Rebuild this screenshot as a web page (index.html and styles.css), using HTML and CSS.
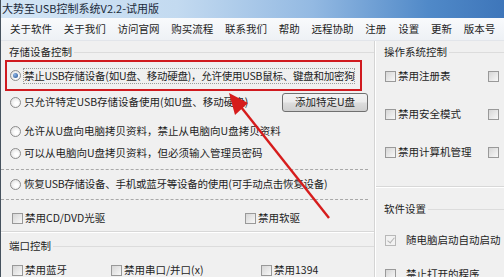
FILE: index.html
```html
<!DOCTYPE html>
<html lang="zh-CN">
<head>
    <meta charset="UTF-8">
    <title>大势至USB控制系统</title>
    <link rel="stylesheet" href="styles.css">
</head>
<body>
<div class="window">
    <div class="titlebar">大势至USB控制系统V2.2-试用版</div>
    <ul class="menubar">
        <li>关于软件</li>
        <li>关于我们</li>
        <li>访问官网</li>
        <li>购买流程</li>
        <li>联系我们</li>
        <li>帮助</li>
        <li>远程协助</li>
        <li>注册</li>
        <li>设置</li>
        <li>更新</li>
        <li>版本号</li>
    </ul>

    <div class="main">
        <!-- 左侧：存储设备 / 端口 -->
        <div class="left">
            <div class="gtitle">存储设备控制</div>
            <div class="redbox">
                <label class="opt tight"><span class="radio checked"></span><span class="focus">禁止USB存储设备(如U盘、移动硬盘)，允许使用USB鼠标、键盘和加密狗</span></label>
            </div>
            <div class="row row2">
                <label class="opt"><span class="radio"></span>只允许特定USB存储设备使用(如U盘、移动硬盘)</label>
                <button class="btn">添加特定U盘</button>
            </div>
            <div class="row row3">
                <label class="opt"><span class="radio"></span>允许从U盘向电脑拷贝资料，禁止从电脑向U盘拷贝资料</label>
            </div>
            <div class="row">
                <label class="opt"><span class="radio"></span>可以从电脑向U盘拷贝资料，但必须输入管理员密码</label>
            </div>
            <div class="dash dash1"></div>
            <div class="row row5">
                <label class="opt tight"><span class="radio"></span>恢复USB存储设备、手机或蓝牙等设备的使用(可手动点击恢复设备)</label>
            </div>
            <div class="dash dash2"></div>
            <div class="row checks checks-a">
                <label class="opt"><span class="check"></span>禁用CD/DVD光驱</label>
                <label class="opt"><span class="check"></span>禁用软驱</label>
            </div>
            <div class="solid"></div>
            <div class="gtitle gtitle-port">端口控制</div>
            <div class="row checks checks-b">
                <label class="opt"><span class="check"></span>禁用蓝牙</label>
                <label class="opt"><span class="check"></span>禁用串口/并口(x)</label>
                <label class="opt"><span class="check"></span>禁用1394</label>
            </div>
        </div>

        <!-- 右侧：系统 / 软件设置 -->
        <div class="right">
            <div class="os">
                <div class="gtitle">操作系统控制</div>
                <div class="osgrid">
                    <label class="opt"><span class="check"></span>禁用注册表</label>
                    <label class="opt"><span class="check"></span></label>
                    <label class="opt"><span class="check"></span>禁用安全模式</label>
                    <label class="opt"><span class="check"></span></label>
                    <label class="opt"><span class="check"></span>禁用计算机管理</label>
                    <label class="opt"><span class="check"></span></label>
                </div>
            </div>
            <div class="soft">
                <div class="gtitle">软件设置</div>
                <label class="opt wide soft1"><span class="check checked"></span>随电脑启动自动启动</label>
                <label class="opt wide soft2"><span class="check"></span>禁止打开的程序</label>
            </div>
        </div>
    </div>

    <svg class="arrow" width="504" height="277" viewBox="0 0 504 277">
        <line x1="329" y1="218" x2="241" y2="107" stroke="#d61c1c" stroke-width="2.4"/>
        <polygon points="229,93 248,103 235,115" fill="#d61c1c"/>
    </svg>
</div>
</body>
</html>
```

FILE: styles.css
```css
* {
    margin: 0;
    padding: 0;
    box-sizing: border-box;
}

body {
    width: 504px;
    height: 277px;
    overflow: hidden;
    background: #f0f0f0;
    font: normal 10.5px/14px "Noto Sans CJK SC", sans-serif;
    color: #1e1e1e;
}

.window {
    position: relative;
    width: 504px;
    height: 277px;
    border-left: 1px solid #46525e;
}

.titlebar {
    height: 18px;
    line-height: 17px;
    padding-left: 1px;
    font-size: 11px;
    color: #1b2a3a;
    background: linear-gradient(to right, #d3e5f5 0%, #c3daf0 35%, #93b9e2 62%, #5089c8 85%, #3e76ba 100%);
}

.menubar {
    list-style: none;
    display: flex;
    height: 23px;
    padding-left: 3px;
    align-items: center;
    background: linear-gradient(#f9fafc, #eef1f5);
    border-bottom: 1px solid #e2e5ea;
}

.menubar li {
    padding: 0 5.9px;
}

.main {
    display: flex;
    height: 236px;
}

.left {
    width: 374px;
    border-right: 1px solid #d4d4d4;
}

.right {
    flex: 1;
    border-left: 1px solid #fff;
    overflow: hidden;
}

.gtitle {
    display: flex;
    align-items: center;
    height: 14px;
    margin-top: 4px;
    padding-left: 8px;
    white-space: nowrap;
}

.gtitle::after {
    content: "";
    flex: 1;
    height: 1px;
    margin-left: 2px;
    background: #dcdcdc;
}

.opt {
    display: flex;
    align-items: center;
    white-space: nowrap;
}

.tight {
    letter-spacing: -0.25px;
}

.radio {
    position: relative;
    width: 11px;
    height: 11px;
    margin-right: 3px;
    border: 1px solid #8d8d8d;
    border-radius: 50%;
    background: radial-gradient(circle at 60% 60%, #ffffff 20%, #d9d9d9 100%);
}

.radio.checked::after {
    content: "";
    position: absolute;
    left: 2px;
    top: 2px;
    width: 5px;
    height: 5px;
    border-radius: 50%;
    background: radial-gradient(circle at 35% 35%, #8fb7e8, #1f4c8c);
}

.check {
    position: relative;
    width: 11px;
    height: 11px;
    margin-right: 2px;
    border: 1px solid #999;
    background: linear-gradient(135deg, #d6d6d6, #f8f8f8);
}

.check.checked {
    border-color: #b8b8b8;
    background: #f2f2f2;
}

.check.checked::after {
    content: "";
    position: absolute;
    left: 3px;
    top: 0;
    width: 3px;
    height: 6px;
    border: solid #b4b4b4;
    border-width: 0 1px 1px 0;
    transform: rotate(40deg);
}

.redbox {
    display: flex;
    align-items: center;
    height: 31px;
    margin: 1px 12px 0 4px;
    padding-left: 3px;
    border: 2px solid #d01a1f;
}

.focus {
    outline: 1px dotted #9a9a9a;
}

.row {
    display: flex;
    align-items: center;
    height: 22px;
    padding-left: 9px;
}

.row2 {
    justify-content: space-between;
    padding-right: 6px;
}

.btn {
    width: 86px;
    height: 19px;
    border: 1px solid #707070;
    border-radius: 3px;
    font: inherit;
    color: #1e1e1e;
    background: linear-gradient(#f3f3f3 0%, #ebebeb 48%, #dddddd 52%, #cfcfcf 100%);
}

.row3 {
    margin-top: 7px;
}

.dash {
    margin-right: 6px;
    border-top: 1px dashed #a8a8a8;
}

.dash1 {
    margin-top: 5px;
}

.dash2 {
    margin-top: 4px;
}

.row5 {
    margin-top: 3px;
}

.checks {
    display: grid;
    padding-left: 11px;
}

.checks-a {
    margin-top: 7px;
    grid-template-columns: 233px 1fr;
}

.solid {
    margin-top: 2px;
    border-top: 1px solid #d8d8d8;
    border-bottom: 1px solid #fff;
}

.gtitle-port {
    margin-top: 6px;
}

.checks-b {
    margin-top: 6px;
    grid-template-columns: 99px 150px 1fr;
}

.os {
    height: 142px;
    border-bottom: 1px solid #d8d8d8;
}

.osgrid {
    display: grid;
    grid-template-columns: 103px 1fr;
    grid-auto-rows: 22px;
    row-gap: 16px;
    margin-top: 6px;
    padding-left: 9px;
}

.soft {
    border-top: 1px solid #fff;
}

.soft .gtitle {
    margin-top: 14px;
}

.wide {
    height: 22px;
    padding-left: 9px;
}

.wide .check {
    margin-right: 10px;
}

.soft1 {
    margin-top: 13px;
}

.soft2 {
    margin-top: 12px;
}

.arrow {
    position: absolute;
    left: -1px;
    top: 0;
    pointer-events: none;
}
```
